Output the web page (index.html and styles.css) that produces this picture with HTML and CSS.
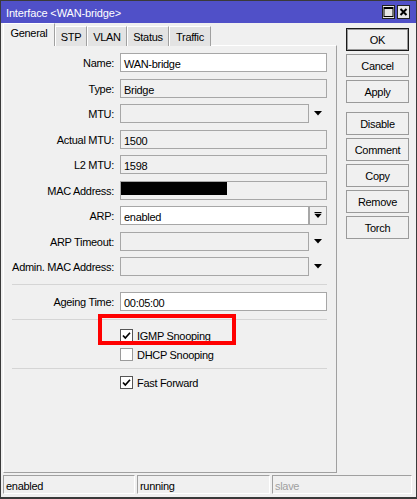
FILE: index.html
```html
<!DOCTYPE html>
<html>
<head>
<meta charset="utf-8">
<link rel="stylesheet" href="styles.css">
</head>
<body>
<div class="window">
  <div class="titlebar">
    <span class="title">Interface &lt;WAN-bridge&gt;</span>
    <span class="tbtn"><svg width="11" height="12" viewBox="0 0 11 12"><rect x="1" y="1.5" width="9" height="9" fill="none" stroke="#000" stroke-width="1"/><rect x="1" y="1" width="9" height="2" fill="#000"/></svg></span>
    <span class="tbtn"><svg width="11" height="12" viewBox="0 0 11 12"><path d="M2.5 3 L8.5 9 M8.5 3 L2.5 9" stroke="#000" stroke-width="2"/></svg></span>
  </div>
  <div class="main">
    <div class="left">
      <div class="tabs">
        <div class="tab active t-general">General</div>
        <div class="tab t-stp">STP</div>
        <div class="tab t-vlan">VLAN</div>
        <div class="tab t-status">Status</div>
        <div class="tab t-traffic">Traffic</div>
      </div>
      <div class="panel">
        <div class="fields">
          <div class="row"><div class="label">Name:</div><div class="field edit">WAN-bridge</div></div>
          <div class="row"><div class="label">Type:</div><div class="field">Bridge</div></div>
          <div class="row"><div class="label">MTU:</div><div class="combo"><div class="field"></div><span class="arrow"><svg width="8" height="5" viewBox="0 0 8 5"><polygon points="0,0 8,0 4,4.5" fill="#000"/></svg></span></div></div>
          <div class="row"><div class="label">Actual MTU:</div><div class="field">1500</div></div>
          <div class="row"><div class="label">L2 MTU:</div><div class="field">1598</div></div>
          <div class="row"><div class="label">MAC Address:</div><div class="field"><span class="mask"></span></div></div>
          <div class="row"><div class="label">ARP:</div><div class="combo"><div class="field edit">enabled</div><span class="arrow boxed"><svg width="8" height="7" viewBox="0 0 8 7"><rect x="0.5" y="0" width="7" height="1.2" fill="#000"/><polygon points="0.5,2 7.5,2 4,6" fill="#000"/></svg></span></div></div>
          <div class="row"><div class="label">ARP Timeout:</div><div class="combo"><div class="field"></div><span class="arrow"><svg width="8" height="5" viewBox="0 0 8 5"><polygon points="0,0 8,0 4,4.5" fill="#000"/></svg></span></div></div>
          <div class="row"><div class="label">Admin. MAC Address:</div><div class="combo"><div class="field"></div><span class="arrow"><svg width="8" height="5" viewBox="0 0 8 5"><polygon points="0,0 8,0 4,4.5" fill="#000"/></svg></span></div></div>
        </div>
        <div class="sep sep1"></div>
        <div class="row ageing"><div class="label">Ageing Time:</div><div class="field edit">00:05:00</div></div>
        <div class="sep sep2"></div>
        <div class="checks">
          <div class="check"><span class="box on"><svg width="11" height="11" viewBox="0 0 11 11"><path d="M2 5.5 L4.3 8 L9 2.8" fill="none" stroke="#000" stroke-width="1.7"/></svg></span>IGMP Snooping</div>
          <div class="check"><span class="box off"></span>DHCP Snooping</div>
        </div>
        <div class="sep sep3"></div>
        <div class="check ff"><span class="box on"><svg width="11" height="11" viewBox="0 0 11 11"><path d="M2 5.5 L4.3 8 L9 2.8" fill="none" stroke="#000" stroke-width="1.7"/></svg></span>Fast Forward</div>
        <div class="highlight"></div>
      </div>
    </div>
    <div class="buttons">
      <div class="btn default">OK</div>
      <div class="btn">Cancel</div>
      <div class="btn">Apply</div>
      <div class="btn spaced">Disable</div>
      <div class="btn">Comment</div>
      <div class="btn">Copy</div>
      <div class="btn">Remove</div>
      <div class="btn">Torch</div>
    </div>
  </div>
  <div class="statusbar">
    <div class="cell">enabled</div>
    <div class="cell">running</div>
    <div class="cell dim">slave</div>
  </div>
</div>
</body>
</html>
```
FILE: styles.css
```css
* { box-sizing: border-box; }
html, body { margin: 0; padding: 0; background: #f0f0f0; }
body {
  font-family: "Liberation Sans", Arial, sans-serif;
  font-size: 11px;
  letter-spacing: -0.3px;
  color: #000;
}
.window {
  width: 417px;
  height: 499px;
  border: 1px solid #3a3a3a;
  border-bottom-width: 2px;
  background: #f0f0f0;
  display: flex;
  flex-direction: column;
}
.titlebar {
  height: 22px;
  background: #5050c8;
  display: flex;
  align-items: flex-start;
  padding: 0 6px 0 5px;
  color: #fff;
}
.title {
  flex: 1;
  padding-top: 3px;
  line-height: 18px;
  letter-spacing: -0.15px;
}
.tbtn {
  width: 13px;
  height: 14px;
  margin-top: 4px;
  margin-left: 2px;
  background: #e6e6e6;
  border: 1px solid #222;
  display: flex;
  align-items: center;
  justify-content: center;
}
.main {
  flex: 1;
  display: flex;
  padding: 0 0 0 2px;
}
.left {
  width: 334px;
  display: flex;
  flex-direction: column;
}
.tabs {
  height: 23px;
  display: flex;
  align-items: flex-end;
  position: relative;
  z-index: 1;
  margin-bottom: -1px;
}
.tab {
  height: 20px;
  padding-top: 3px;
  line-height: 15px;
  text-align: center;
  background: #e3e3e3;
  border-top: 1px solid #fff;
  border-left: 1px solid #fff;
  border-right: 1px solid #a0a0a0;
}
.tab.active {
  height: 23px;
  padding-top: 2px;
  background: #f0f0f0;
}
.t-general { width: 52px; }
.t-stp { width: 32px; }
.t-vlan { width: 40px; }
.t-status { width: 42px; }
.t-traffic { width: 42px; }
.panel {
  flex: 1;
  position: relative;
  border: 1px solid;
  border-color: #fff #a0a0a0 #a0a0a0 #fff;
  padding-top: 7px;
}
.fields {
  display: flex;
  flex-direction: column;
  gap: 6.5px;
}
.row {
  display: grid;
  grid-template-columns: 110px 207px;
  column-gap: 6px;
  height: 19px;
}
.label {
  text-align: right;
  padding-top: 3px;
  line-height: 14px;
  white-space: nowrap;
}
.field {
  height: 19px;
  border: 1px solid #a7a7a7;
  background: #f0f0f0;
  padding: 3px 0 0 3px;
  line-height: 14px;
  position: relative;
  white-space: nowrap;
}
.field.edit { background: #fff; }
.combo {
  display: grid;
  grid-template-columns: 189px 18px;
}
.arrow {
  display: flex;
  align-items: center;
  justify-content: center;
  height: 19px;
}
.arrow.boxed {
  border: 1px solid #a7a7a7;
}
.mask {
  position: absolute;
  left: 0;
  top: 0;
  width: 106px;
  height: 13px;
  background: #000;
}
.sep {
  height: 1px;
  background: #d5d5d5;
  margin-left: 8px;
  width: 315px;
}
.sep1 { margin-top: 8px; }
.ageing { margin-top: 7px; }
.sep2 { margin-top: 8px; }
.checks { margin-top: 6px; }
.check {
  height: 19px;
  display: flex;
  align-items: center;
  padding-left: 116px;
  line-height: 14px;
}
.sep3 { margin-top: 4px; }
.check.ff { margin-top: 4px; }
.box {
  width: 13px;
  height: 13px;
  background: #fff;
  border: 1px solid #555;
  margin-right: 4px;
  display: flex;
  align-items: center;
  justify-content: center;
}
.box.off { border-color: #9a9a9a; }
.highlight {
  position: absolute;
  left: 94px;
  top: 268px;
  width: 138px;
  height: 31px;
  border: 4px solid #f00;
}
.buttons {
  margin-left: 9px;
  padding-top: 5px;
  display: flex;
  flex-direction: column;
  gap: 3px;
}
.btn {
  width: 63px;
  height: 23px;
  border: 1px solid #9a9a9a;
  background: #f0f0f0;
  text-align: center;
  line-height: 20px;
  padding-top: 1px;
}
.btn.default {
  border-color: #1a1a1a;
  box-shadow: inset 0 0 0 1px #9a9a9a;
}
.btn.spaced { margin-top: 6px; }
.statusbar {
  height: 19px;
  margin: 2px 4px 3px 2px;
  display: flex;
  gap: 2px;
}
.cell {
  border: 1px solid;
  border-color: #a0a0a0 #fff #fff #a0a0a0;
  padding: 3px 0 0 2px;
  line-height: 14px;
  width: 132px;
}
.cell:nth-child(2) { width: 133px; }
.cell:nth-child(3) { flex: 1; }
.dim { color: #a0a0a0; }
```
